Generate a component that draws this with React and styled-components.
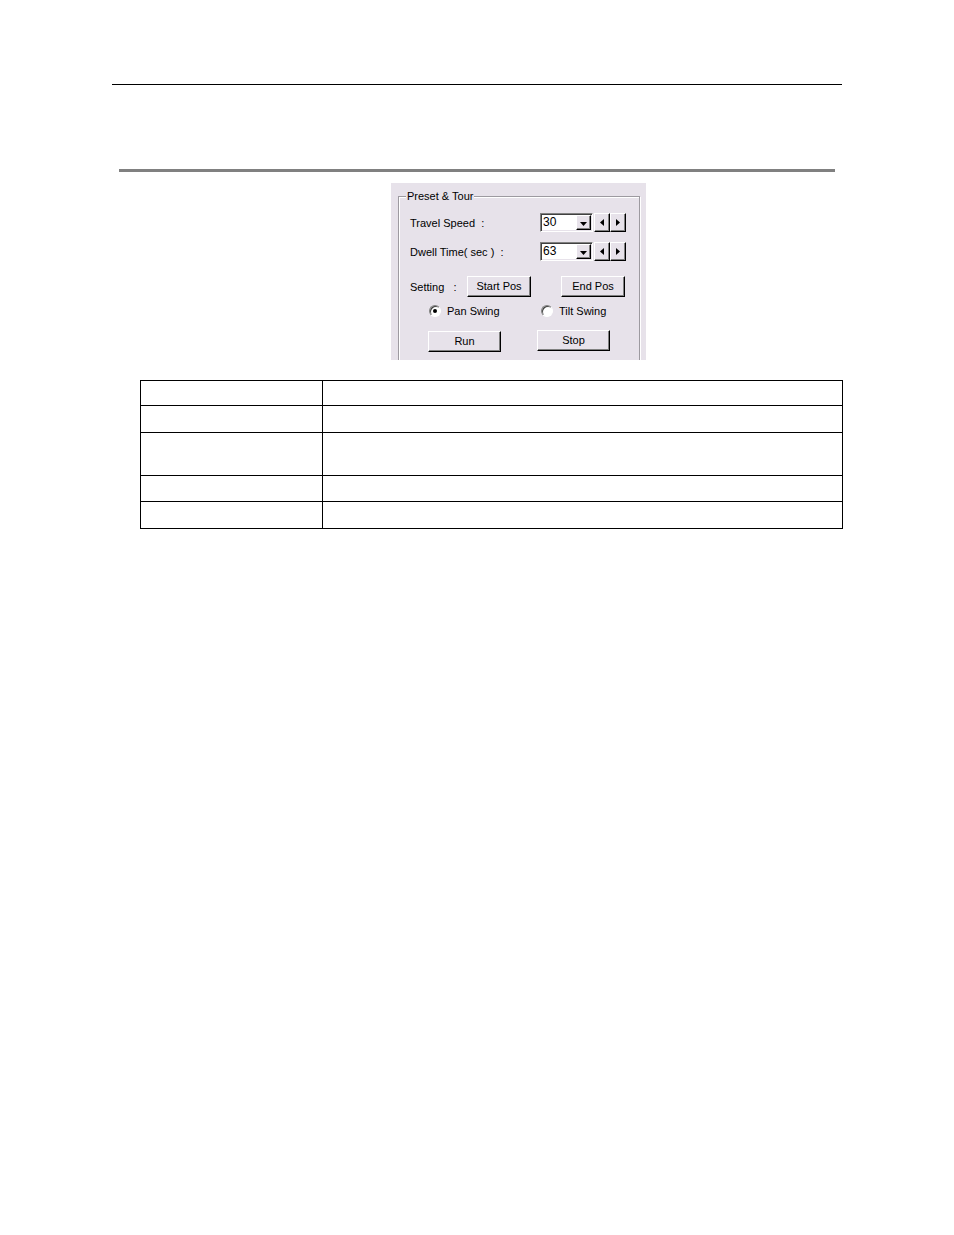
import React from "react";
import styled, { createGlobalStyle } from "styled-components";

//Global
const GlobalStyle = createGlobalStyle`
  html, body {
    margin: 0;
    padding: 0;
    background: #ffffff;
  }
  * {
    box-sizing: border-box;
  }
`;

const face = "#e7e2ea";

//Page
const Page = styled.div`
  position: relative;
  width: 954px;
  height: 1235px;
  overflow: hidden;
  background: #ffffff;
  font-family: "Liberation Sans", Arial, sans-serif;
  padding-top: 84px;
`;

const TopRule = styled.div`
  margin-left: 112px;
  width: 730px;
  height: 1px;
  background: #000000;
`;

const SectionBar = styled.div`
  margin: 84px 0 0 119px;
  width: 716px;
  height: 3px;
  background: #808080;
`;

//Dialog panel
const Panel = styled.div`
  margin: 11px 0 0 391px;
  width: 255px;
  height: 177px;
  overflow: hidden;
  background: ${face};
  padding: 7px 0 0 7px;
  font-size: 11px;
  color: #000;
`;

const Group = styled.fieldset`
  margin: 0;
  padding: 10px 0 0 0;
  width: 242px;
  height: 200px;
  border: 1px solid #9d9aa0;
  box-shadow: inset 1px 1px 0 #ffffff, 1px 1px 0 #ffffff;
`;

const Legend = styled.legend`
  margin-left: 7px;
  padding: 0 1px;
  font-size: 11px;
  line-height: 13px;
  background: ${face};
`;

const Row = styled.div`
  display: flex;
  align-items: center;
  height: ${(p) => p.$h || 19}px;
  margin-top: ${(p) => p.$gap || 0}px;
  padding-left: ${(p) => p.$indent || 11}px;
`;

const Label = styled.span`
  flex: 0 0 ${(p) => p.$w}px;
  white-space: nowrap;
`;

//Controls
const Combo = styled.div`
  display: flex;
  align-items: stretch;
  width: 53px;
  height: 19px;
  background: #ffffff;
  border: 1px solid;
  border-color: #808080 #ffffff #ffffff #808080;
  box-shadow: inset 1px 1px 0 #404040, inset -1px -1px 0 ${face};
  padding: 1px;
`;

const ComboText = styled.span`
  flex: 1;
  padding-left: 1px;
  font-size: 12px;
  line-height: 15px;
`;

const Raised = styled.div`
  display: flex;
  align-items: center;
  justify-content: center;
  background: ${face};
  border: 1px solid;
  border-color: #ffffff #000000 #000000 #ffffff;
  box-shadow: inset -1px -1px 0 #808080;
`;

const DropBtn = styled(Raised)`
  width: 15px;
  padding-top: 2px;
`;

const Spin = styled(Raised)`
  width: 16px;
  height: 19px;
  margin-left: ${(p) => p.$ml || 0}px;
`;

const Button = styled(Raised)`
  width: ${(p) => p.$w}px;
  height: 21px;
  margin-left: ${(p) => p.$ml || 0}px;
  margin-top: ${(p) => p.$mt || 0}px;
  font-size: 11px;
  padding-bottom: 2px;
`;

const RadioWrap = styled.label`
  display: flex;
  align-items: center;
  gap: 6px;
  width: ${(p) => p.$w}px;
  white-space: nowrap;
`;

const RadioDot = styled.span`
  display: inline-flex;
  align-items: center;
  justify-content: center;
  width: 12px;
  height: 12px;
  border-radius: 50%;
  background: #ffffff;
  border: 1px solid;
  border-color: #808080 #ffffff #ffffff #808080;
  box-shadow: inset 1px 1px 0 #404040;
  margin-bottom: 1px;

  &::after {
    content: "";
    width: 4px;
    height: 4px;
    border-radius: 50%;
    background: ${(p) => (p.$on ? "#000" : "transparent")};
  }
`;

//Table
const Table = styled.table`
  margin: 20px 0 0 140px;
  width: 703px;
  border-collapse: collapse;

  td {
    border: 1px solid #000000;
    padding: 0;
  }
  td:first-child {
    width: 182px;
  }
`;

const Tr = styled.tr`
  height: ${(p) => p.$h}px;
`;

//Icons
const ArrowDown = () => (
  <svg width="7" height="4" viewBox="0 0 7 4">
    <polygon points="0,0 7,0 3.5,4" fill="#000" />
  </svg>
);

const ArrowSide = ({ dir }) => (
  <svg width="4" height="7" viewBox="0 0 4 7">
    {dir === "left" ? (
      <polygon points="4,0 4,7 0,3.5" fill="#000" />
    ) : (
      <polygon points="0,0 0,7 4,3.5" fill="#000" />
    )}
  </svg>
);

const SpinCombo = ({ value }) => (
  <>
    <Combo>
      <ComboText>{value}</ComboText>
      <DropBtn>
        <ArrowDown />
      </DropBtn>
    </Combo>
    <Spin $ml={1}>
      <ArrowSide dir="left" />
    </Spin>
    <Spin>
      <ArrowSide dir="right" />
    </Spin>
  </>
);

const Radio = ({ label, on, w }) => (
  <RadioWrap $w={w}>
    <RadioDot $on={on} />
    <span>{label}</span>
  </RadioWrap>
);

export default function App() {
  const rows = [25, 27, 43, 26, 27];

  return (
    <>
      <GlobalStyle />
      <Page>
        <TopRule />
        <SectionBar />
        <Panel>
          <Group>
            <Legend>Preset &amp; Tour</Legend>
            <Row>
              <Label $w={130}>Travel Speed&nbsp; :</Label>
              <SpinCombo value="30" />
            </Row>
            <Row $gap={10}>
              <Label $w={130}>Dwell Time( sec )&nbsp; :</Label>
              <SpinCombo value="63" />
            </Row>
            <Row $gap={15} $h={21}>
              <Label $w={57}>Setting&nbsp;&nbsp; :</Label>
              <Button $w={64}>Start Pos</Button>
              <Button $w={64} $ml={30}>
                End Pos
              </Button>
            </Row>
            <Row $gap={8} $h={12} $indent={30}>
              <Radio label="Pan Swing" on w={112} />
              <Radio label="Tilt Swing" />
            </Row>
            <Row $gap={14} $h={21} $indent={29}>
              <Button $w={73}>Run</Button>
              <Button $w={73} $ml={36} $mt={-2}>
                Stop
              </Button>
            </Row>
          </Group>
        </Panel>
        <Table>
          <tbody>
            {rows.map((h, i) => (
              <Tr key={i} $h={h}>
                <td />
                <td />
              </Tr>
            ))}
          </tbody>
        </Table>
      </Page>
    </>
  );
}
